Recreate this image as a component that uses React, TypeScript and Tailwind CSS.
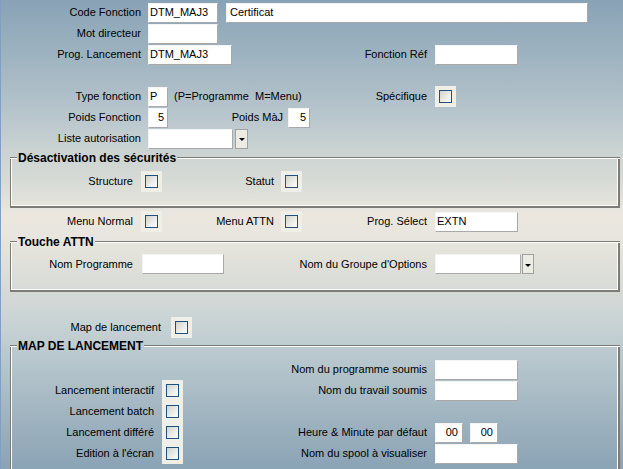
import React from "react";

function Lbl({ c, children }: { c: string; children?: React.ReactNode }) {
  return <div className={"shrink-0 text-right whitespace-nowrap " + c}>{children}</div>;
}

function Inp({ c, children }: { c: string; children?: React.ReactNode }) {
  return (
    <div
      className={
        "shrink-0 h-[20px] bg-white border border-[#f4f4f4] border-r-[#a9a9a9] border-b-[#a9a9a9] flex items-center whitespace-nowrap " +
        c
      }
    >
      {children}
    </div>
  );
}

function Chk({ c = "" }: { c?: string }) {
  return (
    <div className={"shrink-0 w-[21px] h-[21px] bg-[#efeee7] flex items-center justify-center " + c}>
      <div className="w-[13px] h-[13px] border border-[#1c5180] bg-linear-to-br from-[#d3d3cb] to-white" />
    </div>
  );
}

function Btn({ c }: { c: string }) {
  return (
    <div className={"shrink-0 h-[20px] bg-[#ecebe4] border border-[#a0a0a0] flex items-center justify-center " + c}>
      <div className="w-0 h-0 mt-[2px] border-l-[3px] border-r-[3px] border-t-[3px] border-l-transparent border-r-transparent border-t-black" />
    </div>
  );
}

function Row({ c = "", children }: { c?: string; children?: React.ReactNode }) {
  return <div className={"flex items-center h-[21px] " + c}>{children}</div>;
}

function GroupHead({ title }: { title: string }) {
  return (
    <div className="flex items-center h-[14px]">
      <div className="w-[7px] h-[2px] bg-white border-t border-[#7c7c74]" />
      <span className="font-bold text-[12px] px-[1px] leading-[14px] whitespace-nowrap">{title}</span>
      <div className="flex-1 h-[2px] bg-white border-t border-[#7c7c74]" />
    </div>
  );
}

export default function App() {
  return (
    <div className="w-[623px] h-[469px] overflow-hidden bg-[linear-gradient(to_bottom,#88a2b6_0%,#97aebd_8%,#a8bac5_17%,#bbc8ce_26%,#cad3d2_32%,#d8dbd6_39%,#ebe7df_46%,#e6e5dd_52%,#dadcd7_60%,#cad4d5_68%,#b9c8ce_76%,#a5b8c3_86%,#8aa3b5_100%)] shadow-[inset_1px_0_0_#7f9fc4] font-['Liberation_Sans',Arial,sans-serif] text-[11px] leading-[13px] text-black pt-[2px]">
      <Row>
        <Lbl c="w-[141px]">Code Fonction</Lbl>
        <Inp c="ml-[7px] w-[70px] pl-[1px]">DTM_MAJ3</Inp>
        <Inp c="ml-[8px] w-[362px] pl-[3px]">Certificat</Inp>
      </Row>
      <Row>
        <Lbl c="w-[141px]">Mot directeur</Lbl>
        <Inp c="ml-[7px] w-[70px]" />
      </Row>
      <Row>
        <Lbl c="w-[141px]">Prog. Lancement</Lbl>
        <Inp c="ml-[7px] w-[84px] pl-[1px]">DTM_MAJ3</Inp>
        <Lbl c="w-[195px]">Fonction Réf</Lbl>
        <Inp c="ml-[8px] w-[83px]" />
      </Row>
      <Row c="mt-[21px]">
        <Lbl c="w-[141px]">Type fonction</Lbl>
        <Inp c="ml-[7px] w-[20px] pl-[1px]">P</Inp>
        <div className="shrink-0 ml-[6px] w-[136px] whitespace-pre">(P=Programme  M=Menu)</div>
        <Lbl c="w-[117px]">Spécifique</Lbl>
        <Chk c="ml-[8px]" />
      </Row>
      <Row>
        <Lbl c="w-[141px]">Poids Fonction</Lbl>
        <Inp c="ml-[7px] w-[20px] justify-end pr-[3px]">5</Inp>
        <Lbl c="w-[115px]">Poids MàJ</Lbl>
        <Inp c="ml-[5px] w-[22px] justify-end pr-[3px]">5</Inp>
      </Row>
      <Row>
        <Lbl c="w-[141px]">Liste autorisation</Lbl>
        <Inp c="ml-[7px] w-[85px]" />
        <Btn c="ml-[2px] w-[13px]" />
      </Row>

      <div className="ml-[10px] w-[610px] mt-[2px]">
        <GroupHead title="Désactivation des sécurités" />
        <div className="-mt-[7px] h-[50px] border-l border-r-2 border-b-2 border-[#7c7c74] shadow-[inset_1px_0_0_#fff,inset_-1px_-1px_0_#fff] pt-[13px]">
          <Row>
            <Lbl c="w-[122px]">Structure</Lbl>
            <Chk c="ml-[8px]" />
            <Lbl c="w-[112px]">Statut</Lbl>
            <Chk c="ml-[7px]" />
          </Row>
        </div>
      </div>

      <Row c="mt-[3px]">
        <Lbl c="w-[133px]">Menu Normal</Lbl>
        <Chk c="ml-[8px]" />
        <Lbl c="w-[112px]">Menu ATTN</Lbl>
        <Chk c="ml-[7px]" />
        <Lbl c="w-[125px]">Prog. Sélect</Lbl>
        <Inp c="ml-[8px] w-[83px] pl-[1px]">EXTN</Inp>
      </Row>

      <div className="ml-[10px] w-[610px] mt-[3px]">
        <GroupHead title="Touche ATTN" />
        <div className="-mt-[7px] h-[50px] border-l border-r-2 border-b-2 border-[#7c7c74] shadow-[inset_1px_0_0_#fff,inset_-1px_-1px_0_#fff] pt-[12px]">
          <div className="flex items-center h-[20px]">
            <Lbl c="w-[122px]">Nom Programme</Lbl>
            <Inp c="ml-[9px] w-[82px]" />
            <Lbl c="w-[203px]">Nom du Groupe d'Options</Lbl>
            <Inp c="ml-[8px] w-[86px]" />
            <Btn c="ml-[1px] w-[12px]" />
          </div>
        </div>
      </div>

      <Row c="mt-[25px]">
        <Lbl c="w-[161px]">Map de lancement</Lbl>
        <Chk c="ml-[10px]" />
      </Row>

      <div className="ml-[10px] w-[610px] mt-[1px]">
        <GroupHead title="MAP DE LANCEMENT" />
        <div className="-mt-[7px] h-[160px] border-l border-r-2 border-b-2 border-[#7c7c74] shadow-[inset_1px_0_0_#fff,inset_-1px_-1px_0_#fff] pt-[13px]">
          <Row>
            <Lbl c="w-[143px]" />
            <div className="shrink-0 ml-[8px] w-[21px]" />
            <Lbl c="w-[244px]">Nom du programme soumis</Lbl>
            <Inp c="ml-[8px] w-[83px]" />
          </Row>
          <Row>
            <Lbl c="w-[143px]">Lancement interactif</Lbl>
            <Chk c="ml-[8px]" />
            <Lbl c="w-[244px]">Nom du travail soumis</Lbl>
            <Inp c="ml-[8px] w-[83px]" />
          </Row>
          <Row>
            <Lbl c="w-[143px]">Lancement batch</Lbl>
            <Chk c="ml-[8px]" />
          </Row>
          <Row>
            <Lbl c="w-[143px]">Lancement différé</Lbl>
            <Chk c="ml-[8px]" />
            <Lbl c="w-[244px]">Heure &amp; Minute par défaut</Lbl>
            <Inp c="ml-[8px] w-[28px] justify-end pr-[4px]">00</Inp>
            <Inp c="ml-[7px] w-[28px] justify-end pr-[4px]">00</Inp>
          </Row>
          <Row>
            <Lbl c="w-[143px]">Edition à l'écran</Lbl>
            <Chk c="ml-[8px]" />
            <Lbl c="w-[244px]">Nom du spool à visualiser</Lbl>
            <Inp c="ml-[8px] w-[83px]" />
          </Row>
        </div>
      </div>
    </div>
  );
}
